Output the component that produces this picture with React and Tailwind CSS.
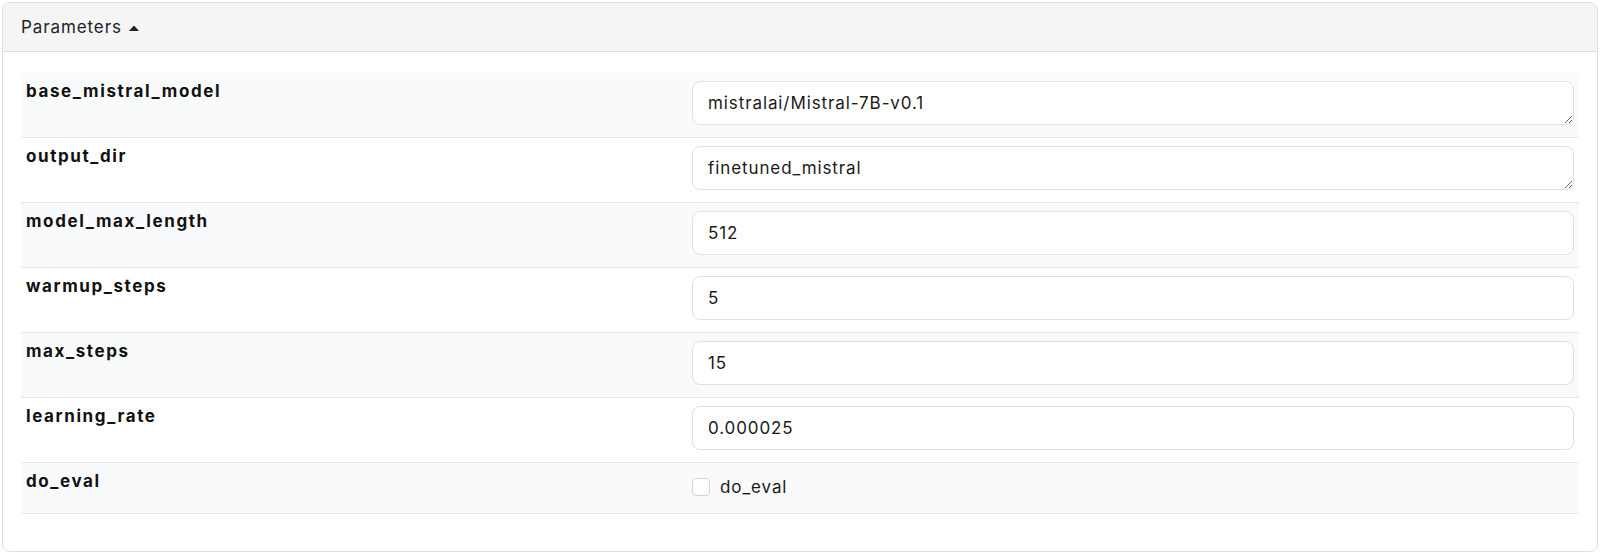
// Parameters panel: collapsible header with a striped key/value form table.

const params = [
  { key: "base_mistral_model", value: "mistralai/Mistral-7B-v0.1", kind: "textarea" },
  { key: "output_dir", value: "finetuned_mistral", kind: "textarea" },
  { key: "model_max_length", value: "512", kind: "input" },
  { key: "warmup_steps", value: "5", kind: "input" },
  { key: "max_steps", value: "15", kind: "input" },
  { key: "learning_rate", value: "0.000025", kind: "input" },
  { key: "do_eval", value: false, kind: "checkbox" },
];

function Field({ p }) {
  if (p.kind === "checkbox") {
    return (
      <label className="flex items-center gap-[10px] pt-[15px] pb-[17px] text-[17px] leading-[18px] tracking-[0.9px] text-[#1a1a1a]">
        <input
          type="checkbox"
          defaultChecked={p.value}
          className="appearance-none h-[18px] w-[18px] rounded-[4px] border border-[#d4d4d4] bg-white"
        />
        {p.key}
      </label>
    );
  }
  if (p.kind === "textarea") {
    return (
      <textarea
        rows={1}
        defaultValue={p.value}
        className="block w-full h-[44px] resize-y rounded-[8px] border border-[#e0e0e0] bg-white px-[15px] py-[10px] text-[17px] leading-[22px] tracking-[0.9px] text-[#1a1a1a] outline-none"
      />
    );
  }
  return (
    <input
      type="text"
      defaultValue={p.value}
      className="block w-full h-[44px] rounded-[8px] border border-[#e0e0e0] bg-white px-[15px] text-[17px] tracking-[0.9px] text-[#1a1a1a] outline-none"
    />
  );
}

export default function App() {
  return (
    <div className="bg-white p-[2px] h-[555px]" style={{ fontFamily: "Inter, 'Open Sans', sans-serif" }}>
      <div className="h-[550px] rounded-[8px] border border-[#dedede] overflow-hidden bg-white">
        {/* Header */}
        <div className="h-[49px] flex items-center gap-[7px] px-[18px] pt-[2px] bg-[#f5f5f5] border-b border-[#dcdcdc] text-[17px] tracking-[0.9px] text-[#222]">
          Parameters
          <svg width="10" height="6" viewBox="0 0 10 6" className="mt-[-1px]">
            <path d="M0 6 L5 0.5 L10 6 Z" fill="#222" />
          </svg>
        </div>

        {/* Table */}
        <div className="px-[18px] pt-[21px]">
          {params.map((p, i) => (
            <div
              key={p.key}
              className={`grid grid-cols-[661px_1fr] border-b border-[#e6e6e6] ${
                i % 2 === 0 ? "bg-[#f9fafb]" : "bg-white"
              }`}
            >
              <div className="px-[5px] pt-[6px] text-[17px] font-bold tracking-[1.6px] text-[#111]">{p.key}</div>
              <div className={`pl-[10px] pr-[5px] ${p.kind === "checkbox" ? "" : "pt-[8px] pb-[12px]"}`}>
                <Field p={p} />
              </div>
            </div>
          ))}
        </div>
      </div>
    </div>
  );
}
